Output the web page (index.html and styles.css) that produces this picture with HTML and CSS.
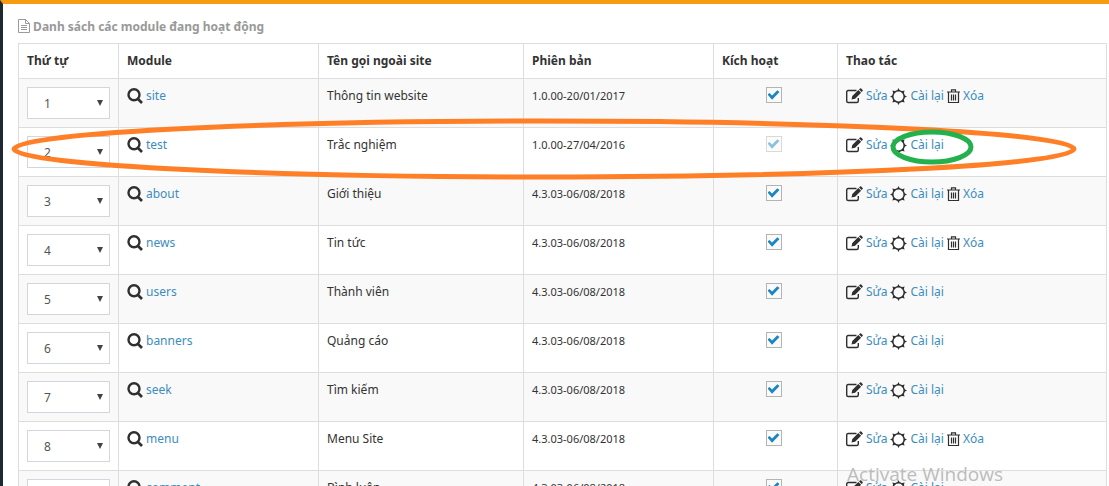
FILE: index.html
```html
<!DOCTYPE html>
<html lang="vi">
<head>
<meta charset="utf-8">
<title>Quản lý module</title>
<link rel="stylesheet" href="styles.css">
</head>
<body>
<svg class="sprite" aria-hidden="true">
  <symbol id="search" viewBox="0 0 16 16"><circle cx="7" cy="6.700" r="5.500" fill="none" stroke="currentColor" stroke-width="2.400"/><path d="M11 11l4 4" stroke="currentColor" stroke-width="2.600"/></symbol>
  <symbol id="edit" viewBox="0 0 17 16"><path d="M10.500 2.500H2.200Q.7 2.500.7 4v9q0 1.500 1.500 1.500h8.600q1.500 0 1.500-1.500V10" fill="none" stroke="currentColor" stroke-width="1.400"/><path d="M5.500 11.500l.8-3.600 6-5.900 2.800 2.800-6 5.900zM13 1.500l1-1q.6-.5 1.200 0l1.400 1.400q.5.6 0 1.200l-1 1z" fill="currentColor"/></symbol>
  <symbol id="gear" viewBox="0 0 17 17"><circle cx="8.500" cy="8.500" r="5.700" fill="none" stroke="currentColor" stroke-width="1.500"/><path d="M7 3l1.500-3L10 3zM7 14l1.500 3 1.500-3zM3 7L0 8.500 3 10zM14 7l3 1.500-3 1.500zM3.300 5.500l-.9-3.100 3.100.9zM11.500 3.300l3.100-.9-.9 3.100zM3.300 11.500l-.9 3.100 3.100-.9zM11.500 13.700l3.100.9-.9-3.100z" fill="currentColor"/></symbol>
  <symbol id="trash" viewBox="0 0 13 15"><path d="M0 3h13M4.500 2.500V.8h4v1.700M1.500 3v10.500h10V3M4.500 5.500v6M6.500 5.500v6M8.500 5.500v6" fill="none" stroke="currentColor" stroke-width="1.200"/></symbol>
  <symbol id="doc" viewBox="0 0 12 14"><path d="M.5.500h7l4 4v9H.5zM7.500.500v4h4M3 6.500h6M3 8.500h6M3 10.500h6" fill="none" stroke="currentColor"/></symbol>
  <symbol id="arrow" viewBox="0 0 6 6"><path d="M0 0h6L3 6z" fill="currentColor"/></symbol>
</svg>
<main class="page">
<table class="modules">
<caption><svg class="icon-doc"><use href="#doc"/></svg> Danh sách các module đang hoạt động</caption>
<colgroup><col class="c-order"><col class="c-module"><col class="c-name"><col class="c-version"><col class="c-active"><col class="c-actions"></colgroup>
<thead><tr><th>Thứ tự</th><th>Module</th><th>Tên gọi ngoài site</th><th>Phiên bản</th><th>Kích hoạt</th><th>Thao tác</th></tr></thead>
<tbody id="rows"></tbody>
</table>
</main>
<svg class="marks" aria-hidden="true"><ellipse class="mark-row" cx="544" cy="149" rx="530" ry="28"/><ellipse class="mark-action" cx="932" cy="147" rx="39" ry="15"/></svg>
<div class="watermark">Activate Windows</div>
<script src="modules.js"></script>
</body>
</html>
```
FILE: styles.css
```css
* { box-sizing: border-box; }
html { height: 100%; overflow: hidden; }
body {
  margin: 0;
  height: 100%;
  overflow: hidden;
  position: relative;
  border-top: 4px solid #f79c10;
  border-left: 3px solid #1e2933;
  background: #fff;
  color: #333;
  font: 12px/18px "Noto Sans", "Open Sans", sans-serif;
}
.sprite { position: absolute; width: 0; height: 0; }
.page { padding: 14px 2px 0 15px; }
.modules { width: 100%; border-collapse: collapse; table-layout: fixed; }
caption { text-align: left; color: #999; font-weight: 700; padding-bottom: 7px; }
.c-order { width: 100px; }
.c-module { width: 200px; }
.c-name { width: 205px; }
.c-version { width: 190px; }
.c-active { width: 124px; }
th, td { border: 1px solid #ddd; padding: 8px; vertical-align: top; text-align: left; }
th { font-weight: 700; }
tbody tr:nth-child(odd) { background: #f9f9f9; }
a { color: #3c8dbc; text-decoration: none; }
.icon-doc { width: 12px; height: 14px; vertical-align: -2px; }
.link-group, .actions { display: flex; align-items: center; gap: 3px; height: 18px; }
.icon { width: 17px; height: 17px; flex: none; color: #2f2f2f; }
.icon-search, .icon-edit { height: 16px; }
.icon-search { width: 16px; }
.icon-trash { width: 13px; height: 15px; }
.version { font-size: 11px; }
.order { position: relative; }
.order select {
  display: block;
  width: 100%;
  height: 32px;
  padding: 2px 16px 0 16px;
  border: 1px solid #d2d6de;
  border-radius: 0;
  background: #fff;
  color: #555;
  font: inherit;
  appearance: none;
}
.order svg { position: absolute; right: 7px; top: 13px; width: 6px; height: 6px; color: #444; pointer-events: none; }
.modules .active { text-align: center; padding-right: 12px; }
.active input {
  appearance: none;
  display: inline-grid;
  place-items: center;
  width: 16px;
  height: 16px;
  margin: 0;
  border: 1px solid #b4b4b4;
  background: #fafafa;
  vertical-align: top;
}
.active input::before {
  content: "";
  width: 12px;
  height: 10px;
  background: #1c86c0;
  clip-path: polygon(0 45%, 16% 30%, 38% 55%, 82% 2%, 100% 20%, 38% 98%);
}
.active input:disabled { opacity: .5; }
.marks { position: absolute; left: -3px; top: -4px; width: 1109px; height: 200px; pointer-events: none; }
.marks ellipse { fill: none; stroke-width: 5px; }
.mark-row { stroke: #ff7f27; }
.mark-action { stroke: #22b14c; }
.watermark { position: absolute; right: 106px; bottom: 0; color: #bcbcbc; font: 19px/24px "Open Sans", sans-serif; pointer-events: none; }
```
FILE: modules.js
```js
const modules = [
  ["site", "Thông tin website", "1.0.00-20/01/2017", true],
  ["test", "Trắc nghiệm", "1.0.00-27/04/2016", false],
  ["about", "Giới thiệu", "4.3.03-06/08/2018", true],
  ["news", "Tin tức", "4.3.03-06/08/2018", true],
  ["users", "Thành viên", "4.3.03-06/08/2018", false],
  ["banners", "Quảng cáo", "4.3.03-06/08/2018", false],
  ["seek", "Tìm kiếm", "4.3.03-06/08/2018", false],
  ["menu", "Menu Site", "4.3.03-06/08/2018", true],
  ["comment", "Bình luận", "4.3.03-06/08/2018", false]
];
const icon = name => `<svg class="icon icon-${name}" aria-hidden="true"><use href="#${name}"/></svg>`;
document.getElementById("rows").innerHTML = modules.map(([id, name, version, removable], i) => `
<tr>
  <td><div class="order"><select aria-label="Thứ tự ${id}">${modules.map((m, n) => `<option${n === i ? " selected" : ""}>${n + 1}</option>`).join("")}</select><svg aria-hidden="true"><use href="#arrow"/></svg></div></td>
  <td><div class="link-group">${icon("search")}<a href="#">${id}</a></div></td>
  <td>${name}</td>
  <td class="version">${version}</td>
  <td class="active"><input type="checkbox" aria-label="Kích hoạt ${id}" checked${id === "test" ? " disabled" : ""}></td>
  <td><div class="actions">${icon("edit")}<a href="#">Sửa</a>${icon("gear")}<a href="#">Cài lại</a>${removable ? `${icon("trash")}<a href="#">Xóa</a>` : ""}</div></td>
</tr>`).join("");
```
